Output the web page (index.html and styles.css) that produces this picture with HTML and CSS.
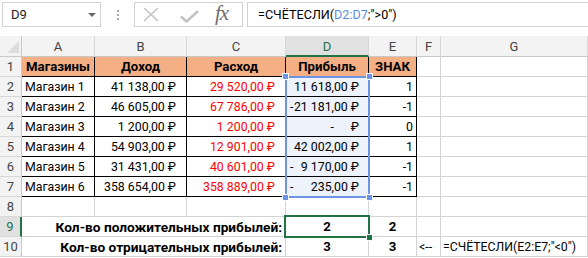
FILE: index.html
```html
<!DOCTYPE html>
<html lang="ru">
<head>
    <meta charset="UTF-8">
    <title>СЧЁТЕСЛИ</title>
    <link rel="stylesheet" href="styles.css">
</head>
<body>
<div class="app">
    <!-- Formula bar -->
    <div class="formula-bar">
        <div class="name-box">
            <span>D9</span>
            <span class="arrow"></span>
        </div>
        <div class="grip"><i></i><i></i><i></i></div>
        <div class="fx-buttons">
            <svg class="btn-x" width="16" height="15" viewBox="0 0 16 15">
                <path d="M1 1 L15 14 M15 1 L1 14" stroke="#c3c3c3" stroke-width="1.6" fill="none"/>
            </svg>
            <svg class="btn-ok" width="19" height="13" viewBox="0 0 19 13">
                <path d="M1 6.5 L6.5 11.5 L18 1" stroke="#c3c3c3" stroke-width="2.6" fill="none"/>
            </svg>
            <span class="fx">fx</span>
        </div>
        <div class="formula">=СЧЁТЕСЛИ(<span class="ref">D2:D7</span>;"&gt;0")</div>
    </div>

    <!-- Sheet -->
    <div class="sheet">
        <div class="corner"><span></span></div>
        <div class="ch">A</div>
        <div class="ch">B</div>
        <div class="ch">C</div>
        <div class="ch active">D</div>
        <div class="ch">E</div>
        <div class="ch">F</div>
        <div class="ch">G</div>

        <div class="rh">1</div>
        <div class="c t head">Магазины</div>
        <div class="c t head">Доход</div>
        <div class="c t head">Расход</div>
        <div class="c t head">Прибыль</div>
        <div class="c t head">ЗНАК</div>
        <div class="c"></div>
        <div class="c"></div>

        <div class="rh">2</div>
        <div class="c t">Магазин 1</div>
        <div class="c t num">41 138,00 ₽</div>
        <div class="c t num red">29 520,00 ₽</div>
        <div class="c t acc"><span></span><span>11 618,00 ₽</span></div>
        <div class="c t sign">1</div>
        <div class="c"></div>
        <div class="c"></div>

        <div class="rh">3</div>
        <div class="c t">Магазин 2</div>
        <div class="c t num">46 605,00 ₽</div>
        <div class="c t num red">67 786,00 ₽</div>
        <div class="c t acc"><span>-</span><span>21 181,00 ₽</span></div>
        <div class="c t sign">-1</div>
        <div class="c"></div>
        <div class="c"></div>

        <div class="rh">4</div>
        <div class="c t">Магазин 3</div>
        <div class="c t num">1 200,00 ₽</div>
        <div class="c t num red">1 200,00 ₽</div>
        <div class="c t acc zero"><span>-</span><span>₽</span></div>
        <div class="c t sign">0</div>
        <div class="c"></div>
        <div class="c"></div>

        <div class="rh">5</div>
        <div class="c t">Магазин 4</div>
        <div class="c t num">54 903,00 ₽</div>
        <div class="c t num red">12 901,00 ₽</div>
        <div class="c t acc"><span></span><span>42 002,00 ₽</span></div>
        <div class="c t sign">1</div>
        <div class="c"></div>
        <div class="c"></div>

        <div class="rh">6</div>
        <div class="c t">Магазин 5</div>
        <div class="c t num">31 431,00 ₽</div>
        <div class="c t num red">40 601,00 ₽</div>
        <div class="c t acc"><span>-</span><span>9 170,00 ₽</span></div>
        <div class="c t sign">-1</div>
        <div class="c"></div>
        <div class="c"></div>

        <div class="rh">7</div>
        <div class="c t">Магазин 6</div>
        <div class="c t num">358 654,00 ₽</div>
        <div class="c t num red">358 889,00 ₽</div>
        <div class="c t acc"><span>-</span><span>235,00 ₽</span></div>
        <div class="c t sign">-1</div>
        <div class="c"></div>
        <div class="c"></div>

        <div class="rh">8</div>
        <div class="c"></div>
        <div class="c"></div>
        <div class="c"></div>
        <div class="c"></div>
        <div class="c"></div>
        <div class="c"></div>
        <div class="c"></div>

        <div class="rh active">9</div>
        <div class="c label">Кол-во положительных прибылей:</div>
        <div class="c total">2</div>
        <div class="c total">2</div>
        <div class="c"></div>
        <div class="c"></div>

        <div class="rh">10</div>
        <div class="c label">Кол-во отрицательных прибылей:</div>
        <div class="c total">3</div>
        <div class="c total">3</div>
        <div class="c note">&lt;--</div>
        <div class="c note">=СЧЁТЕСЛИ(E2:E7;"&lt;0")</div>

        <!-- selection overlays -->
        <div class="ref-range">
            <i class="h tl"></i><i class="h tr"></i><i class="h bl"></i><i class="h br"></i>
        </div>
        <div class="cursor"><i></i></div>
    </div>
</div>
</body>
</html>
```

FILE: styles.css
```css
/* Base */
body {
    margin: 0;
    background: #fff;
    font: 12.3px Roboto, "Noto Sans", sans-serif;
    color: #000;
}
.app {
    width: 588px;
    height: 258px;
    overflow: hidden;
}

/* Formula bar */
.formula-bar {
    display: flex;
    align-items: flex-start;
    height: 36px;
    padding-top: 2px;
    box-sizing: border-box;
}
.name-box {
    margin-left: 2px;
    width: 99px;
    height: 25px;
    border: 1px solid #d2d2d2;
    box-sizing: border-box;
    display: flex;
    align-items: center;
    justify-content: space-between;
    padding: 0 4px 0 8px;
    font-size: 13px;
    color: #222;
}
.name-box .arrow {
    width: 0;
    height: 0;
    border-left: 4px solid transparent;
    border-right: 4px solid transparent;
    border-top: 4px solid #6a6a6a;
}
.grip {
    width: 33px;
    display: flex;
    flex-direction: column;
    align-items: center;
    gap: 2px;
    padding-top: 8px;
}
.grip i {
    width: 2px;
    height: 2px;
    background: #a8a8a8;
}
.fx-buttons {
    width: 109px;
    height: 25px;
    border: 1px solid #d2d2d2;
    box-sizing: border-box;
    display: flex;
    align-items: center;
    padding-left: 8px;
}
.btn-x {
    margin-right: 21px;
}
.btn-ok {
    margin-right: 16px;
    margin-top: 3px;
}
.fx {
    font: italic 21px "Liberation Serif", serif;
    color: #6e6e6e;
    letter-spacing: -1px;
    margin-top: -2px;
}
.formula {
    flex: 1;
    margin-left: 4px;
    height: 25px;
    border: 1px solid #d2d2d2;
    border-right: none;
    box-sizing: border-box;
    padding-left: 10px;
    line-height: 23px;
    font-size: 12.6px;
    white-space: nowrap;
}
.formula .ref {
    color: #5a8ae0;
}

/* Sheet grid */
.sheet {
    position: relative;
    display: grid;
    grid-template-columns: 22px 73px 92px 99px 83px 48px 24px 147px;
    grid-template-rows: 21px repeat(10, 20px);
}
.sheet > div {
    box-sizing: border-box;
    white-space: nowrap;
}
.corner {
    background: #f3f3f3;
    border-right: 1px solid #c8c8c8;
    border-bottom: 1px solid #c8c8c8;
    position: relative;
}
.corner span {
    position: absolute;
    right: 2px;
    bottom: 3px;
    width: 0;
    height: 0;
    border-left: 12px solid transparent;
    border-bottom: 12px solid #dcdcdc;
}
.ch {
    background: #f3f3f3;
    border-right: 1px solid #d8d8d8;
    border-bottom: 1px solid #c8c8c8;
    text-align: center;
    line-height: 21px;
    font-size: 13px;
    color: #444;
}
.ch.active {
    background: #e1e1e1;
    color: #217346;
    border-bottom: 2px solid #217346;
}
.rh {
    background: #f3f3f3;
    border-right: 1px solid #c8c8c8;
    border-bottom: 1px solid #d8d8d8;
    text-align: center;
    line-height: 19px;
    font-size: 13px;
    color: #444;
}
.rh.active {
    background: #e1e1e1;
    color: #217346;
    border-right: 2px solid #217346;
}
.c {
    border-right: 1px solid #d4d4d4;
    border-bottom: 1px solid #d4d4d4;
    line-height: 20px;
    padding: 0 3px;
    overflow: hidden;
}

/* Data table */
.c.t {
    border-right-color: #000;
    border-bottom-color: #000;
}
.head {
    background: #f4b084;
    font-weight: bold;
    font-size: 13.2px;
    text-align: center;
}
.num {
    text-align: right;
    padding-right: 10px;
}
.red {
    color: #f00;
}
.acc {
    background: #edf2fb;
    display: flex;
    justify-content: space-between;
    padding: 0 9px 0 4px;
}
.acc.zero {
    justify-content: flex-end;
    gap: 17px;
}
.sign {
    text-align: right;
}

/* Totals */
.label {
    grid-column: 2 / 5;
    text-align: right;
    font-weight: bold;
    font-size: 13.7px;
}
.total {
    text-align: center;
    font-weight: bold;
    font-size: 13.2px;
}
.note {
    padding-left: 2px;
}

/* Selections */
.ref-range {
    grid-column: 5 / 6;
    grid-row: 3 / 9;
    position: absolute;
    inset: -1px -1px -1px -1px;
    border: 2px solid #6d93e4;
}
.ref-range .h {
    position: absolute;
    width: 5px;
    height: 5px;
    background: #6d93e4;
    border: 1px solid #fff;
}
.ref-range .tl { left: -5px; top: -5px; }
.ref-range .tr { right: -5px; top: -5px; }
.ref-range .bl { left: -5px; bottom: -5px; }
.ref-range .br { right: -5px; bottom: -5px; }
.cursor {
    grid-column: 5 / 6;
    grid-row: 10 / 11;
    position: absolute;
    inset: -2px -1px -1px -2px;
    border: 2px solid #217346;
}
.cursor i {
    position: absolute;
    right: -5px;
    bottom: -5px;
    width: 5px;
    height: 5px;
    background: #217346;
    border: 1px solid #fff;
}
```
